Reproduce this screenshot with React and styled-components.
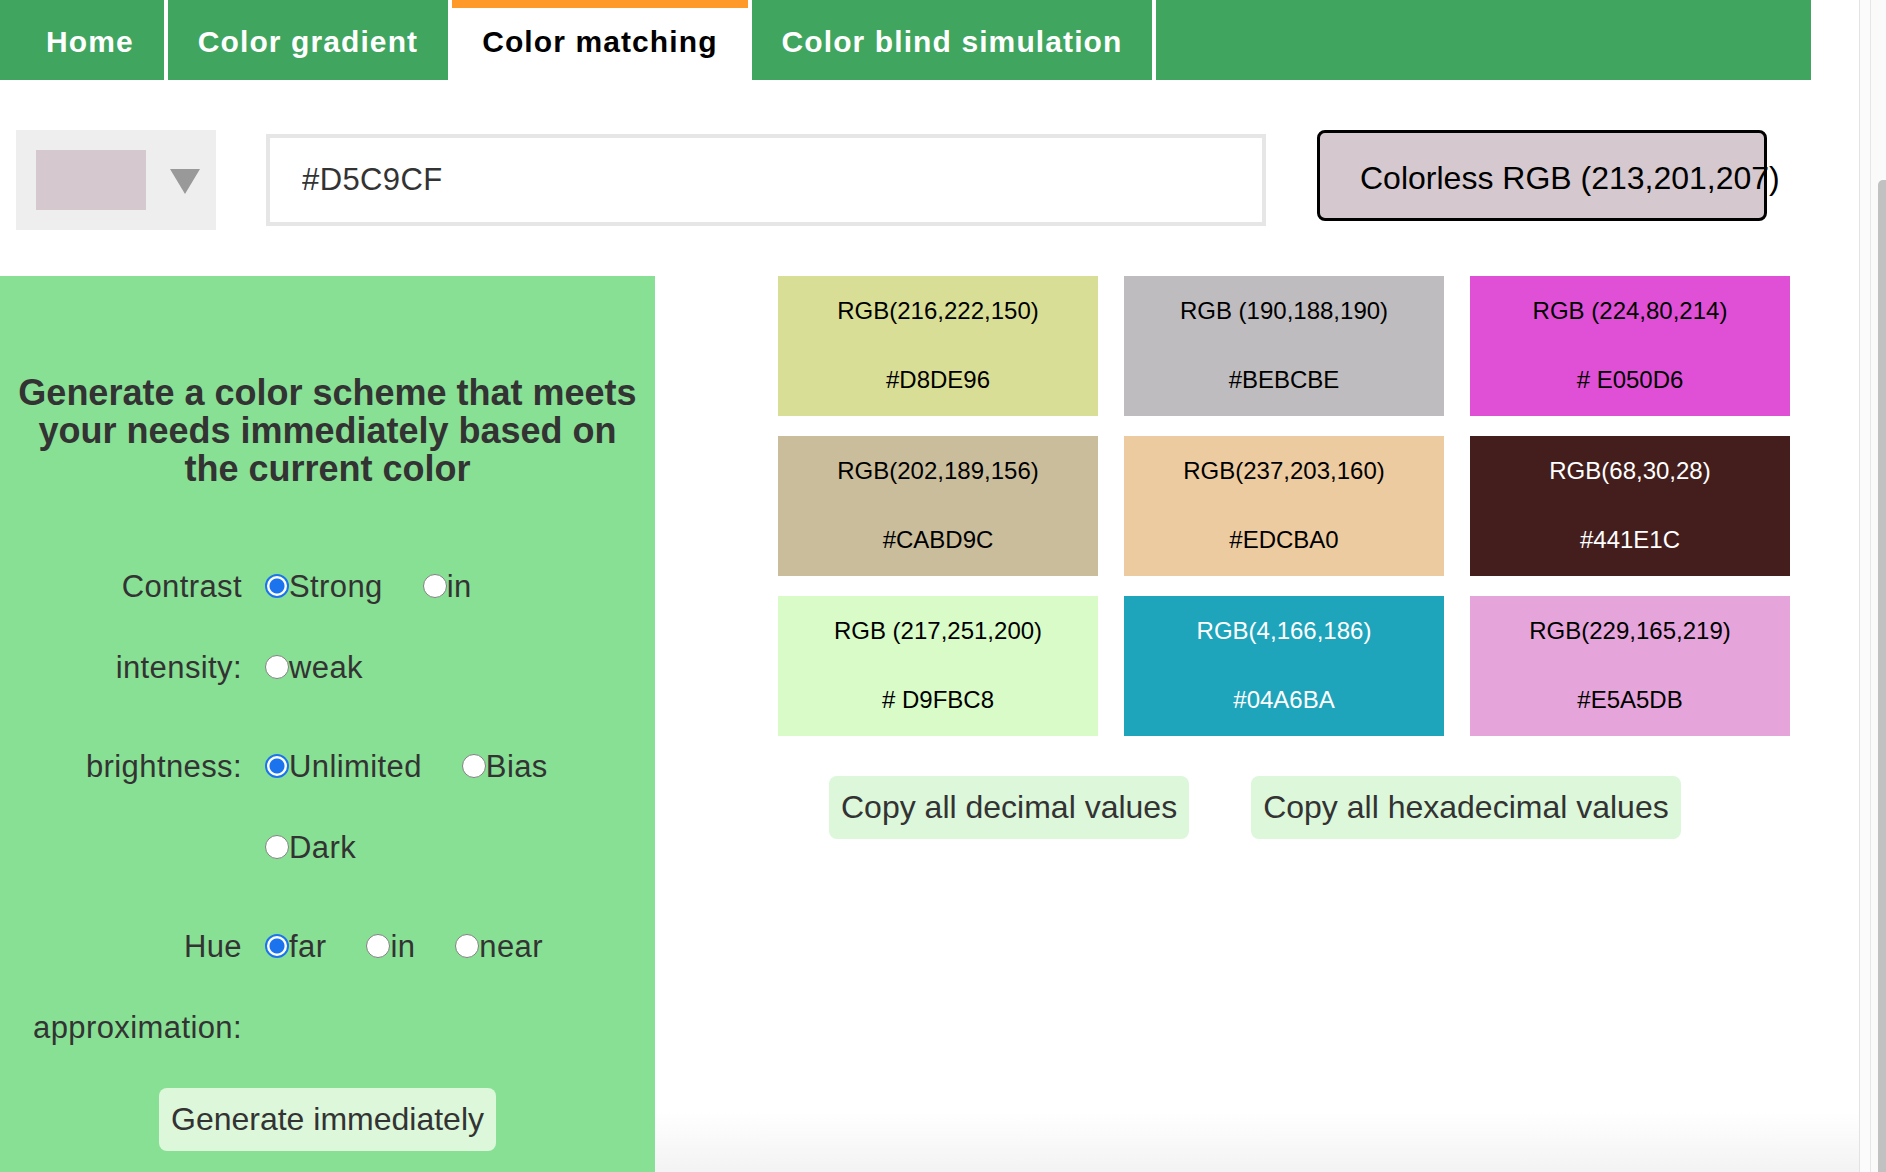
import styled, { createGlobalStyle } from "styled-components";

const GlobalStyle = createGlobalStyle`
  * { box-sizing: border-box; }
  html, body { margin: 0; padding: 0; height: 100%; overflow: hidden; }
  body { font-family: "Liberation Sans", Arial, sans-serif; background: #fff; }
`

const tabs = ["Home", "Color gradient", "Color matching", "Color blind simulation"]

const colors = [
    { rgb: "RGB(216,222,150)", hex: "#D8DE96", bg: "rgb(216,222,150)" },
    { rgb: "RGB (190,188,190)", hex: "#BEBCBE", bg: "rgb(190,188,190)" },
    { rgb: "RGB (224,80,214)", hex: "# E050D6", bg: "rgb(224,80,214)" },
    { rgb: "RGB(202,189,156)", hex: "#CABD9C", bg: "rgb(202,189,156)" },
    { rgb: "RGB(237,203,160)", hex: "#EDCBA0", bg: "rgb(237,203,160)" },
    { rgb: "RGB(68,30,28)", hex: "#441E1C", bg: "rgb(68,30,28)", light: true },
    { rgb: "RGB (217,251,200)", hex: "# D9FBC8", bg: "rgb(217,251,200)" },
    { rgb: "RGB(4,166,186)", hex: "#04A6BA", bg: "rgb(30,165,187)", light: true },
    { rgb: "RGB(229,165,219)", hex: "#E5A5DB", bg: "rgb(229,165,219)" },
]

const groups = [
    { name: "contrast", label: "Contrast intensity:", options: ["Strong", "in", "weak"] },
    { name: "brightness", label: "brightness:", options: ["Unlimited", "Bias", "Dark"] },
    { name: "hue", label: "Hue approximation:", options: ["far", "in", "near"] },
]

export default function App() {
    return (
        <>
            <GlobalStyle />
            <Page>
                <Main>
                    <Nav>
                        {tabs.map((t, i) => (
                            <Tab key={t} $active={i === 2} $first={i === 0}>{t}</Tab>
                        ))}
                        <NavFill />
                    </Nav>

                    <Toolbar>
                        <Picker>
                            <PickerSwatch />
                            <Arrow />
                        </Picker>
                        <HexInput defaultValue="#D5C9CF" />
                        <ColorlessButton>Colorless RGB (213,201,207)</ColorlessButton>
                    </Toolbar>

                    <Content>
                        <Panel>
                            <Heading>
                                Generate a color scheme that meets your needs immediately based on the current color
                            </Heading>
                            <Form>
                                {groups.map(g => (
                                    <Group key={g.name}>
                                        <GroupLabel>{g.label}</GroupLabel>
                                        <Options>
                                            {g.options.map((o, i) => (
                                                <Option key={o}>
                                                    <Radio type="radio" name={g.name} defaultChecked={i === 0} />
                                                    {o}
                                                </Option>
                                            ))}
                                        </Options>
                                    </Group>
                                ))}
                            </Form>
                            <GenerateButton>Generate immediately</GenerateButton>
                        </Panel>

                        <Results>
                            <Grid>
                                {colors.map(c => (
                                    <ColorCard key={c.hex} $bg={c.bg} $light={c.light}>
                                        <CardLine>{c.rgb}</CardLine>
                                        <CardLine>{c.hex}</CardLine>
                                    </ColorCard>
                                ))}
                            </Grid>
                            <CopyRow>
                                <CopyButton>Copy all decimal values</CopyButton>
                                <CopyButton>Copy all hexadecimal values</CopyButton>
                            </CopyRow>
                        </Results>
                    </Content>
                </Main>

                <ScrollTrack>
                    <TrackStrip />
                    <ThumbCol>
                        <Thumb />
                    </ThumbCol>
                </ScrollTrack>
            </Page>
        </>
    )
}

const Page = styled.div`
display: flex;
height: 100vh;
`

const Main = styled.div`
flex: 1;
display: flex;
flex-direction: column;
background: linear-gradient(180deg, #fff calc(100% - 60px), #f3f3f3 100%);
`

const Nav = styled.nav`
display: flex;
gap: 4px;
height: 80px;
margin-right: 48px;
background-color: #fff;
`

const Tab = styled.div`
display: flex;
align-items: center;
padding: 0 30px 4px ${p => p.$first ? "46px" : "30px"};
border-top: 8px solid ${p => p.$active ? "#FF9A2A" : "#40A55F"};
background-color: ${p => p.$active ? "#fff" : "#40A55F"};
color: ${p => p.$active ? "#000" : "#fff"};
font-size: 30px;
font-weight: 700;
letter-spacing: 1.1px;
white-space: nowrap;
`

const NavFill = styled.div`
flex: 1;
background-color: #40A55F;
`

const Toolbar = styled.div`
display: flex;
align-items: flex-start;
padding-left: 16px;
margin-top: 50px;
`

const Picker = styled.div`
width: 200px;
height: 100px;
display: flex;
align-items: center;
gap: 24px;
padding: 0 16px 0 20px;
background-color: #eeeeee;
`

const PickerSwatch = styled.div`
width: 110px;
height: 60px;
background-color: #D5C9CF;
`

const Arrow = styled.div`
width: 0;
height: 0;
margin-top: 2px;
border-left: 15px solid transparent;
border-right: 15px solid transparent;
border-top: 25px solid #999;
`

const HexInput = styled.input`
width: 1000px;
height: 92px;
margin: 4px 0 0 50px;
padding: 0 32px;
border: 4px solid #e6e6e6;
background-color: #fff;
font-family: "Liberation Sans", Arial, sans-serif;
font-size: 31px;
letter-spacing: 0.4px;
color: #333;
outline: none;
`

const ColorlessButton = styled.div`
width: 450px;
height: 91px;
margin-left: 51px;
padding: 6px 0 0 40px;
display: flex;
align-items: center;
border: 3px solid #000;
border-radius: 8px;
background-color: #D5C9CF;
font-size: 32px;
color: #000;
white-space: nowrap;
`

const Content = styled.div`
flex: 1;
display: flex;
margin-top: 46px;
`

const Panel = styled.div`
width: 655px;
display: flex;
flex-direction: column;
padding: 98px 8px 0;
background-color: #88E094;
`

const Heading = styled.h2`
margin: 0;
text-align: center;
font-size: 36px;
font-weight: 700;
line-height: 38px;
color: #333;
`

const Form = styled.div`
margin-top: 58px;
padding-left: 12px;
`

const Group = styled.div`
display: flex;
gap: 23px;
& + & {
  margin-top: 18px;
}
`

const GroupLabel = styled.div`
width: 222px;
text-align: right;
font-size: 31px;
line-height: 81px;
letter-spacing: 0.4px;
color: #333;
`

const Options = styled.div`
width: 335px;
display: flex;
flex-wrap: wrap;
align-content: flex-start;
column-gap: 40px;
`

const Option = styled.label`
display: block;
white-space: nowrap;
font-size: 31px;
line-height: 81px;
letter-spacing: 0.4px;
color: #333;
`

const Radio = styled.input`
appearance: none;
width: 24px;
height: 24px;
margin: 0;
vertical-align: -1px;
border-radius: 50%;
border: 1.5px solid #808080;
background-color: #fff;
&:checked {
  border: 2px solid #1b74ee;
  background: radial-gradient(circle at center, #1b74ee 0 7px, #fff 8px);
}
`

const GenerateButton = styled.button`
align-self: center;
width: 337px;
height: 63px;
margin-top: 20px;
padding: 0;
border: none;
border-radius: 8px;
background-color: #DCF7DA;
font-family: "Liberation Sans", Arial, sans-serif;
font-size: 32px;
color: #333;
`

const Results = styled.div`
align-self: flex-start;
margin-left: 123px;
`

const Grid = styled.div`
display: grid;
grid-template-columns: repeat(3, 320px);
column-gap: 26px;
row-gap: 20px;
`

const ColorCard = styled.div`
height: 140px;
display: flex;
flex-direction: column;
gap: 41px;
padding-top: 21px;
background-color: ${p => p.$bg};
color: ${p => p.$light ? "#fff" : "#000"};
text-align: center;
font-size: 24px;
line-height: 28px;
`

const CardLine = styled.div`
white-space: nowrap;
`

const CopyRow = styled.div`
display: flex;
gap: 62px;
padding-left: 51px;
margin-top: 40px;
`

const CopyButton = styled.button`
height: 63px;
padding: 0 12px;
border: none;
border-radius: 8px;
background-color: #DCF7DA;
font-family: "Liberation Sans", Arial, sans-serif;
font-size: 32px;
color: #333;
white-space: nowrap;
`

const ScrollTrack = styled.div`
width: 27px;
display: flex;
background-color: #fafafa;
`

const TrackStrip = styled.div`
width: 12px;
border-left: 1px solid #e3e3e3;
border-right: 1px solid #e6e6e6;
background-color: #fbfbfb;
`

const ThumbCol = styled.div`
flex: 1;
display: flex;
padding: 180px 0 0 7px;
`

const Thumb = styled.div`
width: 8px;
background-color: #c1c1c1;
border-radius: 5px 0 0 0;
`
